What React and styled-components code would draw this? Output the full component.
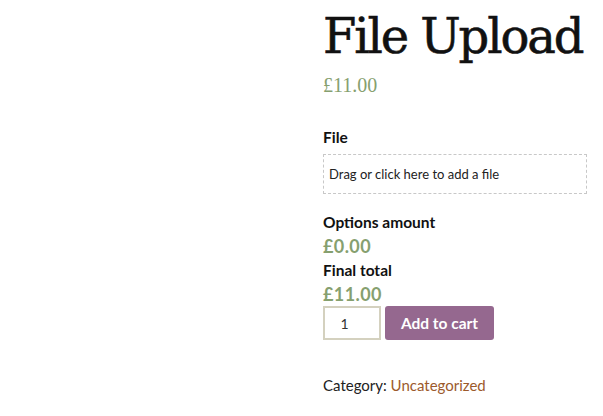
import React from 'react';
import styled, { createGlobalStyle } from 'styled-components';

const GlobalStyle = createGlobalStyle`
  body {
    margin: 0;
    background: #fff;
    font-family: "Lato", "Open Sans", sans-serif;
    color: #111;
  }
`;

const Page = styled.div`
  display: flex;
  width: 603px;
  height: 416px;
  overflow: hidden;
`;

// product image column (empty in this shot)
const Gallery = styled.div`
  width: 323px;
  flex: none;
`;

const Summary = styled.div`
  width: 264px;
  display: flex;
  flex-direction: column;
`;

const Title = styled.h1`
  margin: 8px 0 0;
  font-family: "DejaVu Serif", "Liberation Serif", serif;
  font-weight: 400;
  font-size: 48px;
  line-height: 56px;
  letter-spacing: -2.1px;
  -webkit-text-stroke: 0.6px #111;
  color: #111;
  white-space: nowrap;
`;

const Price = styled.p`
  margin: 9px 0 0;
  font-family: "Liberation Serif", serif;
  font-size: 20px;
  line-height: 24px;
  color: #86a06f;
`;

const Label = styled.div`
  margin-top: ${p => p.$top || 0}px;
  font-size: 15.5px;
  font-weight: 700;
  line-height: 24px;
  color: #111;
`;

const DropZone = styled.div`
  margin-top: 5px;
  height: 38px;
  border: 1px dashed #c8c8c8;
  display: flex;
  align-items: center;
  padding-left: 5px;
  font-size: 13px;
  color: #222;
`;

const Amount = styled.div`
  font-size: 18px;
  font-weight: 700;
  line-height: 24px;
  color: #86a06f;
  letter-spacing: 0.4px;
`;

const CartRow = styled.div`
  display: flex;
  gap: 4px;
`;

const Qty = styled.input`
  width: 58px;
  height: 34px;
  box-sizing: border-box;
  border: 2px solid #d4d1bf;
  text-align: center;
  font-family: "Lato", sans-serif;
  font-size: 14px;
  color: #333;
  padding: 0;
  outline: none;
`;

const CartButton = styled.button`
  width: 109px;
  height: 34px;
  border: none;
  border-radius: 3px;
  background: #95688f;
  color: #fff;
  font-family: "Lato", sans-serif;
  font-weight: 700;
  font-size: 15.5px;
`;

const Meta = styled.div`
  margin-top: 33px;
  font-size: 15px;
  line-height: 24px;
  color: #222;
`;

const CatLink = styled.a`
  color: #9c5a2c;
  text-decoration: none;
`;

export default function App() {
  return (
    <Page>
      <GlobalStyle />
      <Gallery />
      <Summary>
        <Title>File Upload</Title>
        <Price>£11.00</Price>
        <Label $top={28}>File</Label>
        <DropZone>Drag or click here to add a file</DropZone>
        <Label $top={16}>Options amount</Label>
        <Amount>£0.00</Amount>
        <Label>Final total</Label>
        <Amount>£11.00</Amount>
        <CartRow>
          <Qty type="number" defaultValue={1} />
          <CartButton>Add to cart</CartButton>
        </CartRow>
        <Meta>
          Category: <CatLink href="#">Uncategorized</CatLink>
        </Meta>
      </Summary>
    </Page>
  );
}
